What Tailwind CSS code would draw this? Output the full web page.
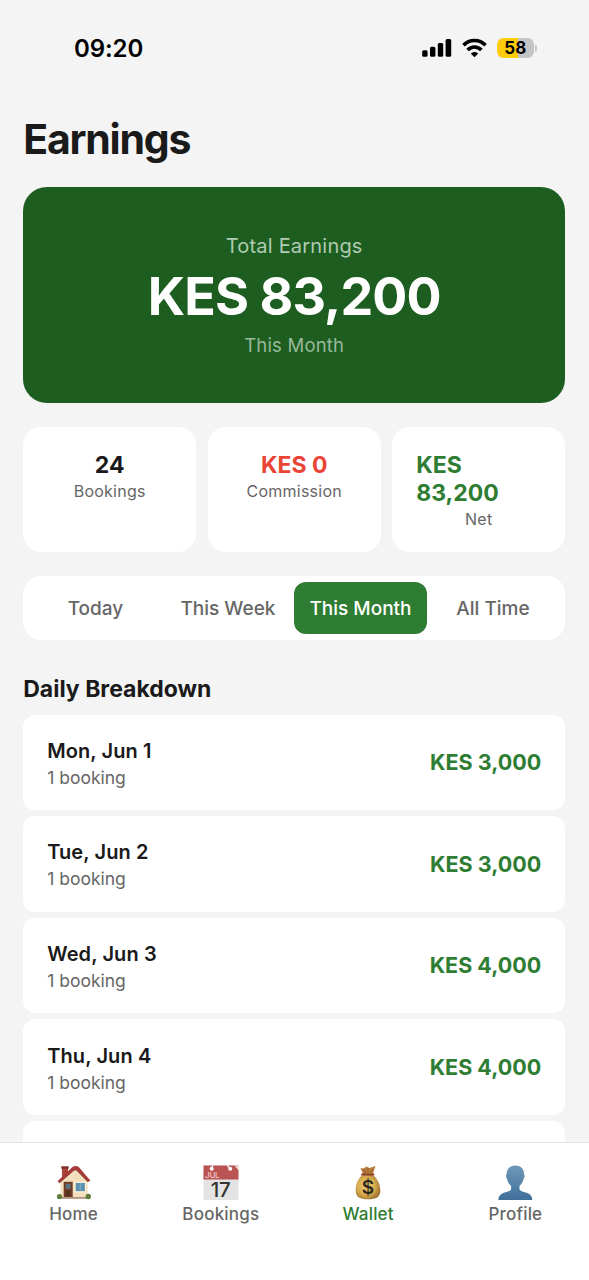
<!DOCTYPE html>
<html lang="en">
<head>
<meta charset="utf-8">
<meta name="viewport" content="width=device-width, initial-scale=1">
<title>Earnings</title>
<script src="https://cdn.jsdelivr.net/npm/@tailwindcss/browser@4"></script>
</head>
<body class="bg-[#f4f4f4]">
<div class="flex h-[1280px] w-[589px] flex-col overflow-hidden bg-[#f4f4f4] font-['Inter',sans-serif] text-[#1a1a1a]">

  <header class="flex h-[96px] shrink-0 items-center justify-between pr-[52px] pl-[74px]">
    <span class="pt-[1px] text-[24px] font-semibold tracking-[-0.1px] text-black">09:20</span>
    <div class="flex items-center">
      <svg class="h-[20px] w-[30px]" viewBox="0 0 30 20" fill="#000"><rect x="0.2" y="12.2" width="5.4" height="6.6" rx="1.5"/><rect x="8" y="8.8" width="5.4" height="10" rx="1.5"/><rect x="15.8" y="5" width="5.4" height="13.8" rx="1.5"/><rect x="23.6" y="1" width="5.6" height="17.8" rx="1.5"/></svg>
      <svg class="ml-[10px] h-[20px] w-[25px]" viewBox="0 0 25 20" fill="none" stroke="#000" stroke-width="3.6"><path d="M1.5 7.3C7.4 .9 17.6 .9 23.5 7.3"/><path d="M5.6 12.1C9.500 8 15.500 8 19.400 12.1"/><path d="M12.500 19.200L8.800 15.500C10.900 13.400 14.100 13.400 16.200 15.500Z" fill="#000" stroke="none"/></svg>
      <div class="ml-[10.500px] flex h-[20px] w-[36.500px] items-center justify-center rounded-[6.500px] bg-linear-to-r from-[#fccb0a] from-58% to-[#c4c4c5] to-58% pt-[1px] text-[17px] font-bold text-black">58</div>
      <div class="ml-[1.500px] h-[7px] w-[2px] rounded-r-full bg-[#c8c8c8]"></div>
    </div>
  </header>

  <main class="flex min-h-0 flex-1 flex-col overflow-hidden pr-[23.800px] pl-[23.200px]">
    <h1 class="mt-[18px] h-[50px] shrink-0 text-[41px] leading-[50px] font-bold tracking-[-1.200px]">Earnings</h1>

    <section class="mt-[23px] flex h-[216px] shrink-0 flex-col items-center rounded-[24px] bg-[#1d5e20] pt-[46px] text-white">
      <p class="text-[20px] leading-[26px] tracking-[0.200px] text-[#b0cbb1]">Total Earnings</p>
      <p class="mt-[6px] text-[52px] leading-[64px] font-bold tracking-[-0.900px]">KES 83,200</p>
      <p class="mt-[3px] text-[18.500px] leading-[26px] tracking-[0.200px] text-[#98b99a]">This Month</p>
    </section>

    <section class="mt-[24px] grid h-[125px] shrink-0 grid-cols-3 gap-[11.500px]">
      <div class="flex flex-col items-center rounded-[18px] bg-white px-[24px] pt-[24px]">
        <p class="text-[23px] leading-[28px] font-bold">24</p>
        <p class="text-[16px] leading-[24px] tracking-[0.250px] text-[#666]">Bookings</p>
      </div>
      <div class="flex flex-col items-center rounded-[18px] bg-white px-[24px] pt-[24px]">
        <p class="text-[23px] leading-[28px] font-bold text-[#e94436]">KES 0</p>
        <p class="text-[16px] leading-[24px] tracking-[0.250px] text-[#666]">Commission</p>
      </div>
      <div class="flex flex-col items-center rounded-[18px] bg-white px-[24px] pt-[24px]">
        <p class="w-full text-[23px] leading-[28px] font-bold text-[#2e7d32]">KES<br>83,200</p>
        <p class="text-[16px] leading-[24px] tracking-[0.250px] text-[#666]">Net</p>
      </div>
    </section>

    <section class="mt-[23.500px] grid h-[64px] shrink-0 grid-cols-4 rounded-[18px] bg-white p-[6px] text-center text-[19px] leading-[53px] font-medium whitespace-nowrap text-[#666]">
      <div>Today</div>
      <div>This Week</div>
      <div class="h-[52px] rounded-[12px] bg-[#2e7d32] text-white">This Month</div>
      <div>All Time</div>
    </section>

    <h2 class="mt-[34px] h-[30px] shrink-0 text-[23px] leading-[30px] font-bold">Daily Breakdown</h2>

    <section class="mt-[11px] flex flex-col gap-[6px]">
      <div class="flex h-[95.600px] shrink-0 items-center justify-between rounded-[12px] bg-white px-[24px]">
        <div class="pt-[3px]"><p class="text-[20px] leading-[27px] font-semibold tracking-[0.100px]">Mon, Jun 1</p><p class="text-[17.500px] leading-[25px] text-[#666]">1 booking</p></div>
        <p class="text-[21.500px] font-bold text-[#2e7d32]">KES 3,000</p>
      </div>
      <div class="flex h-[95.600px] shrink-0 items-center justify-between rounded-[12px] bg-white px-[24px]">
        <div class="pt-[3px]"><p class="text-[20px] leading-[27px] font-semibold tracking-[0.100px]">Tue, Jun 2</p><p class="text-[17.500px] leading-[25px] text-[#666]">1 booking</p></div>
        <p class="text-[21.500px] font-bold text-[#2e7d32]">KES 3,000</p>
      </div>
      <div class="flex h-[95.600px] shrink-0 items-center justify-between rounded-[12px] bg-white px-[24px]">
        <div class="pt-[3px]"><p class="text-[20px] leading-[27px] font-semibold tracking-[0.100px]">Wed, Jun 3</p><p class="text-[17.500px] leading-[25px] text-[#666]">1 booking</p></div>
        <p class="text-[21.500px] font-bold text-[#2e7d32]">KES 4,000</p>
      </div>
      <div class="flex h-[95.600px] shrink-0 items-center justify-between rounded-[12px] bg-white px-[24px]">
        <div class="pt-[3px]"><p class="text-[20px] leading-[27px] font-semibold tracking-[0.100px]">Thu, Jun 4</p><p class="text-[17.500px] leading-[25px] text-[#666]">1 booking</p></div>
        <p class="text-[21.500px] font-bold text-[#2e7d32]">KES 4,000</p>
      </div>
      <div class="h-[95.600px] shrink-0 rounded-[12px] bg-white"></div>
    </section>
  </main>

  <nav class="grid h-[138px] shrink-0 grid-cols-4 border-t border-[#e4e4e4] bg-white pt-[21px] text-center text-[17px] leading-[24px] font-medium tracking-[0.200px] text-[#666]">
    <div class="flex flex-col items-center">
      <svg class="h-[38px] w-[38px]" viewBox="0 0 38 38">
        <path d="M7 3.500h6V14H7z" fill="#a8453c"/><path d="M6.300 2.300h7.400v2.400H6.300z" fill="#7e2d2a"/>
        <path d="M5.500 17L20.500 3.500 32.500 17v17.500h-27z" fill="#f3dfbd"/>
        <path d="M2.500 17.200L17.200 3.200Q20.500 1 24 3.200L35.500 16.700l-2.700 1.200L21.800 6.400Q20.300 5.400 18.800 6.400L4.500 19z" fill="#a83b39"/>
        <path d="M4.500 19L18.800 6.400Q20.300 5.400 21.800 6.400L32.800 17.900" fill="none" stroke="#7d4a36" stroke-width=".7"/>
        <rect x="8.700" y="17.800" width="9" height="15.900" fill="#6f3d25"/><rect x="10.700" y="19.800" width="5" height="5" fill="#58737d"/><rect x="10.900" y="27" width="4.600" height="5" fill="#54301f"/>
        <rect x="19.500" y="17.800" width="11.500" height="10.500" fill="#fff5da"/><rect x="20.600" y="18.900" width="9.300" height="8.300" fill="#5d93b0"/><path d="M25.300 19v8" stroke="#8db9cd" stroke-width=".7"/>
        <path d="M6 33h27v1.800H6z" fill="#b0957c"/><circle cx="4.500" cy="32.500" r="2.600" fill="#558238"/><circle cx="33.300" cy="32.500" r="2.700" fill="#558238"/><circle cx="4" cy="31.800" r=".8" fill="#bd5a4a"/><circle cx="33.500" cy="31.800" r=".8" fill="#bd5a4a"/>
      </svg>
      <span>Home</span>
    </div>
    <div class="flex flex-col items-center">
      <svg class="h-[38px] w-[38px]" viewBox="0 0 38 38">
        <path d="M1.500 1.500H36.500v34.500H1.500z" fill="#e3e3e3"/><path d="M1.500 1.500H36.500v14H1.500z" fill="#b95452"/>
        <circle cx="9.700" cy="4.700" r="2" fill="#fff"/><path d="M9.700 5l1-4" stroke="#eee" stroke-width="1.300"/><circle cx="28.200" cy="4.700" r="2" fill="#fff"/><path d="M28.200 4.700L25 1M36.500 1v4l-3-3.500" stroke="#f6e6e6" stroke-width="1.500" fill="none"/>
        <text x="3" y="14" font-family="Inter, sans-serif" font-size="8" fill="#f3c9c8" letter-spacing="-.2">JUL</text>
        <text x="18.600" y="33" text-anchor="middle" font-family="Inter, sans-serif" font-size="20.500" font-weight="500" letter-spacing="-.3" fill="#333">17</text>
      </svg>
      <span>Bookings</span>
    </div>
    <div class="flex flex-col items-center text-[#2e7d32]">
      <svg class="h-[38px] w-[38px]" viewBox="0 0 38 38">
        <defs><radialGradient id="sack" cx=".42" cy=".45" r=".62"><stop offset="0" stop-color="#efcd74"/><stop offset=".6" stop-color="#d6a94d"/><stop offset="1" stop-color="#9c7030"/></radialGradient></defs>
        <path d="M13.500 11C8.500 15 6.500 21 6.700 27c.2 6 4 8.300 12.300 8.300S31.300 33 31.300 27c0-6-2.500-12-7.500-16z" fill="url(#sack)"/>
        <path d="M14 10L11.500 4l3 .5 3-2 3 1.500 6-2-2.700 8z" fill="#b87d3c"/><path d="M16 9l-1-4M19 9V4M22 9l1.500-4" stroke="#8b562a" stroke-width=".8"/>
        <path d="M13 10.500h11.500" stroke="#8a452c" stroke-width="2" stroke-linecap="round"/>
        <text x="19" y="29.500" text-anchor="middle" font-family="Inter, sans-serif" font-size="19" font-weight="600" fill="#29261b">$</text>
      </svg>
      <span>Wallet</span>
    </div>
    <div class="flex flex-col items-center">
      <svg class="h-[38px] w-[38px]" viewBox="0 0 38 38">
        <defs><linearGradient id="person" x1="0" y1="0" x2="0" y2="1"><stop offset="0" stop-color="#7099b9"/><stop offset="1" stop-color="#3e6f9a"/></linearGradient></defs>
        <path d="M19.300 1.500c5.500 0 9 3.800 8.700 9 .9.300.9 2.500-.7 5.200-.8 2.800-2 4.700-3.800 6.200v3.300c1 2.500 5.500 2.800 8.500 4 3 1.300 4 3.500 4.300 6.800H2.300c.3-3.300 1.300-5.500 4.300-6.800 3-1.200 7.500-1.500 8.500-4v-3.300c-1.800-1.500-3-3.400-3.800-6.200-1.600-2.700-1.600-4.900-.7-5.200-.3-5.200 3.200-9 8.700-9z" fill="url(#person)"/>
      </svg>
      <span>Profile</span>
    </div>
  </nav>
</div>
</body>
</html>
